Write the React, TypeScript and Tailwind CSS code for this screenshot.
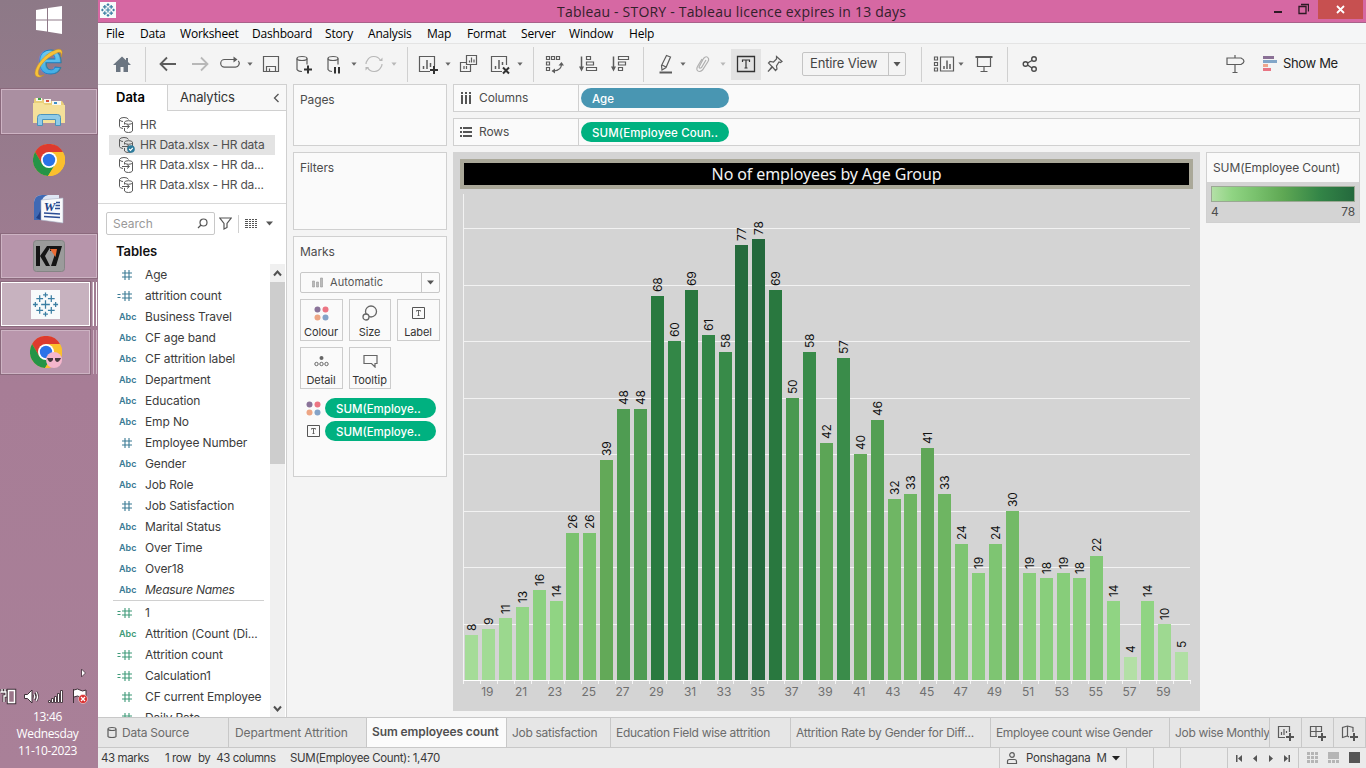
import React from "react";

type Kids = { children?: React.ReactNode; className?: string };

const ui = "font-['Inter',sans-serif]";

function Ico({ children, className = "", w = 24, h = 24 }: Kids & { w?: number; h?: number }) {
  return (
    <svg
      width={w}
      height={h}
      viewBox={`0 0 ${w} ${h}`}
      fill="none"
      stroke="#5c5c5c"
      strokeWidth="1.2"
      className={`shrink-0 ${className}`}
    >
      {children}
    </svg>
  );
}

function Caret({ className = "", color = "#666" }: { className?: string; color?: string }) {
  return (
    <svg width="8" height="8" viewBox="0 0 8 8" className={`shrink-0 ${className}`}>
      <path d="M1.4 2.4h5.2L4 5.8z" fill={color} />
    </svg>
  );
}

function Div({ className = "" }: { className?: string }) {
  return <div className={`h-[35px] w-px shrink-0 bg-[#d0d0d0] ${className}`} />;
}

function TableauMark({ size, cls = "" }: { size: number; cls?: string }) {
  const plus = (x: number, y: number, r: number) => `M${x - r} ${y}h${2 * r}M${x} ${y - r}v${2 * r}`;
  return (
    <svg width={size} height={size} viewBox="0 0 30 30" className={`shrink-0 ${cls}`}>
      <rect width="30" height="30" fill="#f8fafb" />
      <path
        d={[
          plus(15, 15, 4.5),
          plus(9, 9, 3.5),
          plus(21, 9, 3.5),
          plus(9, 21, 3.5),
          plus(21, 21, 3.5),
          plus(15, 5, 2.5),
          plus(15, 25, 2.5),
          plus(4.5, 15, 2.5),
          plus(25.5, 15, 2.5),
        ].join("")}
        stroke="#3c7fa3"
        strokeWidth={size < 20 ? 2.2 : 1.3}
        fill="none"
      />
    </svg>
  );
}

function Chrome() {
  return (
    <svg width="32" height="32" viewBox="0 0 32 32">
      <circle cx="16" cy="16" r="16" fill="#fbc02d" />
      <path d="M2.1 8A16 16 0 0 1 29.9 8H16L9 20z" fill="#dd3a2e" />
      <path d="M2.1 8A16 16 0 0 0 15 32l7.5-12.5L9.5 20.5z" fill="#259447" />
      <path d="M16 8h13.9A16 16 0 0 1 15 32l8-12z" fill="#fbc02d" />
      <circle cx="16" cy="16" r="8" fill="#fff" />
      <circle cx="16" cy="16" r="6.2" fill="#2b72e8" />
    </svg>
  );
}

function Taskbar() {
  const btn = "mx-px flex w-[96px] shrink-0 items-center justify-center border border-[#cdb3c3] outline outline-1 outline-[#8b6a7d]";
  return (
    <aside className="flex h-[768px] w-[98px] shrink-0 flex-col overflow-hidden bg-gradient-to-b from-[#8d7987] via-[#a77d96] to-[#a98098] font-['Open_Sans',sans-serif]">
      <div className="flex h-[40px] items-center justify-center">
        <svg width="28" height="28" viewBox="0 0 28 28" fill="#fff">
          <path d="M1 4l11-1.8v11.3H1zM13 2l14-2v13.500H13zM1 14.500h11v11L1 24zM13 14.500h14V28l-14-2.300z" />
        </svg>
      </div>
      <div className="flex h-[49px] items-center justify-center pb-[3px]">
        <svg width="32" height="32" viewBox="0 0 32 32" overflow="visible">
          <defs>
            <linearGradient id="ie" x1="0" y1="0" x2="0" y2="1">
              <stop offset="0" stopColor="#8fdcf8" />
              <stop offset="1" stopColor="#2fa3e0" />
            </linearGradient>
          </defs>
          <text x="17" y="27" textAnchor="middle" fontSize="44" fontWeight="700" fontFamily="Liberation Sans" fill="url(#ie)" stroke="#1d7fc0" strokeWidth="0.8">e</text>
          <path d="M3 29C-1 24 9 9 20 4c8-4 11-1 8 6 1-5-1-6-6-3C11 12 3 23 6 28c1 1 3 1 5 0-3 2-6 3-8 1z" fill="#f6c23a" stroke="#c98d1c" strokeWidth="0.5" />
        </svg>
      </div>
      <div className={`${btn} h-[45px] bg-[#aa8fa1]`}>
        <svg width="32" height="30" viewBox="0 0 32 30">
          <path d="M1 3l1-2h7l1 2h7l1 1h11l2 3v19H1z" fill="#e9cf79" />
          <path d="M3 1h6v3H3z" fill="#f7f7f0" />
          <path d="M5 1h3v2H5z" fill="#43a047" />
          <path d="M11 2h7v4h-7z" fill="#f7f7f0" />
          <path d="M13 3h3v2h-3z" fill="#d7513b" />
          <path d="M19 4h9v4h-9z" fill="#f7f7f0" />
          <path d="M21 5h3v2h-3z" fill="#3b8fc9" />
          <path d="M0 6h10l2 2h20v18H0z" fill="#f4e09a" />
          <path d="M4.500 28.500v-8q0-3 3-3h17q3 0 3 3v8h-5v-6h-13v6z" fill="#8fcbe8" stroke="#4b94bd" />
        </svg>
      </div>
      <div className="flex h-[52px] items-center justify-center"><Chrome /></div>
      <div className="flex h-[46px] items-center justify-center">
        <svg width="30" height="30" viewBox="0 0 30 30">
          <path d="M0 26V8q1-7 8-7h17v25z" fill="#dfe6f4" />
          <path d="M0 26V8q1-7 8-7h6q-6 1-7 9v16z" fill="#3f69b4" />
          <path d="M2 24q3-3 5-9v11z" fill="#1f3f85" />
          <path d="M7 6l22-2v25L7 26z" fill="#f9fafc" stroke="#a9b2c6" strokeWidth="0.6" />
          <text x="15.500" y="16.500" textAnchor="middle" fontSize="13" fontStyle="italic" fontWeight="700" fontFamily="Liberation Serif" fill="#203f86">W</text>
          <path d="M22 8.500h4M21.500 11.500h4.500M21 14.500h5M10 19l16 1M10 22.500l16 1" stroke="#2c4d94" strokeWidth="1.7" />
        </svg>
      </div>
      <div className={`${btn} mt-[2px] h-[44px] bg-[#b795ab]`}>
        <svg width="32" height="32" viewBox="0 0 32 32">
          <rect x="0.500" y="0.500" width="31" height="31" rx="3" fill="#9b9b9b" stroke="#858585" />
          <path d="M3 6h4v20H3zM7 16l7-10h4l-6 10 5 10h-4zM17 6h12l-6 20h-5l5-15h-6z" fill="#151515" />
          <path d="M17 9h7l-1.500 8z" fill="#ec6b33" />
        </svg>
      </div>
      <div className="mx-px mt-[4px] flex h-[44px] shrink-0">
        <div className="flex w-[89px] items-center justify-center border border-white bg-[#c7b2bf] outline outline-1 outline-[#8b6a7d]">
          <TableauMark size={29} />
        </div>
        <div className="ml-[2px] w-[2px] border-r border-white bg-[#c0a8b7]" />
        <div className="ml-[2px] w-px bg-white" />
      </div>
      <div className="mx-px mt-[4px] flex h-[44px] shrink-0">
        <div className="flex w-[89px] items-center justify-center border border-[#cdb3c3] bg-[#b996ac] outline outline-1 outline-[#8b6a7d]">
          <div className="relative h-[32px] w-[32px]">
            <Chrome />
            <svg width="16" height="16" viewBox="0 0 16 16" className="absolute right-0 bottom-0">
              <circle cx="8" cy="8" r="8" fill="#f4b6cc" />
              <path d="M1 6h6v2q-3 4-5 0zM9 6h6l-1 2q-3 4-5 0z" fill="#45393e" />
            </svg>
          </div>
        </div>
        <div className="ml-[2px] w-[2px] border-r border-[#cdb3c3]" />
        <div className="ml-[2px] w-px bg-[#cdb3c3]" />
      </div>
      <div className="mt-auto flex justify-end pr-[11px]">
        <svg width="7" height="10" viewBox="0 0 7 10"><path d="M1.500 1l4 4-4 4z" fill="#fff" stroke="#5d4653" /></svg>
      </div>
      <div className="mt-[10px] flex h-[17px] items-center">
        <svg width="90" height="17" viewBox="0 0 90 17" fill="none" stroke="#3f3038">
          <path d="M1 4h5v4H4v6M2 1v3M5 1v3" stroke="#3f3038" strokeWidth="3" />
          <path d="M0.500 4h5.500v4H4v6M2 1v3M5 1v3" stroke="#fff" strokeWidth="1.300" />
          <rect x="8.500" y="2.500" width="6" height="12" stroke="#3f3038" strokeWidth="3.500" />
          <rect x="8.500" y="2.500" width="6" height="12" fill="#9a7589" stroke="#fff" strokeWidth="1.500" />
          <path d="M24.500 6.500h3l4.500-4.500v13l-4.500-4.500h-3z" fill="#fff" />
          <path d="M34 6q1.500 2.500 0 5M36 4q3 4.500 0 9" stroke="#3f3038" strokeWidth="2.600" />
          <path d="M34 6q1.500 2.500 0 5M36 4q3 4.500 0 9" stroke="#fff" strokeWidth="1.200" />
          <path d="M48.500 12.500h2v2h-2zM51.500 10.500h2v4h-2zM54.500 8.500h2v6h-2zM57.500 5.500h2v9h-2zM60.500 2.500h2v12h-2z" fill="#fff" strokeWidth="0.900" />
          <path d="M73.500 1v14M74 2q4-2 6 0t6 0v7q-4 2-6 0t-6 0" fill="#fff" />
          <circle cx="83" cy="11" r="4.500" fill="#d93030" stroke="#fff" strokeWidth="0.500" />
          <path d="M81 9l4 4M85 9l-4 4" stroke="#fff" strokeWidth="1.300" />
        </svg>
      </div>
      <div className="mt-[3px] mb-[9px] pr-[3px] text-center text-[12px] leading-[17px] tracking-[-0.35px] text-white">
        <div>13:46</div>
        <div>Wednesday</div>
        <div>11-10-2023</div>
      </div>
    </aside>
  );
}

const menus: [string, string][] = [
  ["File", "w-[34px]"], ["Data", "w-[40px]"], ["Worksheet", "w-[72px]"], ["Dashboard", "w-[73px]"],
  ["Story", "w-[43px]"], ["Analysis", "w-[59px]"], ["Map", "w-[40px]"], ["Format", "w-[54px]"],
  ["Server", "w-[48px]"], ["Window", "w-[60px]"], ["Help", "w-[40px]"],
];

function TitleBar() {
  return (
    <>
      <div className="flex h-[23px] shrink-0 items-center border-b border-[#a8618a] bg-[#d668a3] font-['Open_Sans',sans-serif]">
        <TableauMark size={16} cls="ml-[2px] -mt-[2px]" />
        <div className="w-[441px]" />
        <span className="whitespace-nowrap text-[14px] tracking-[0.2px] text-[#33202b]">Tableau - STORY - Tableau licence expires in 13 days</span>
        <svg width="36" height="16" viewBox="0 0 36 16" className="mr-[9px] ml-auto self-start" fill="none" stroke="#2c1a24">
          <path d="M1 12h8" strokeWidth="2" />
          <path d="M26 6.500h7v7h-7zM28 4.500h7.500v7" strokeWidth="1.300" />
        </svg>
        <div className="mr-[3px] flex h-[19px] w-[45px] items-center justify-center self-start bg-[#c75050]">
          <svg width="9" height="9" viewBox="0 0 9 9"><path d="M1 1l7 7M8 1L1 8" stroke="#fff" strokeWidth="1.800" /></svg>
        </div>
      </div>
      <div className="flex h-[21px] shrink-0 items-center border-b border-[#e4e4e4] bg-[#f5f6f7] pt-[2px] pl-[8px] font-['Open_Sans',sans-serif] text-[12px] tracking-[-0.2px] text-black">
        {menus.map(([m, w]) => (
          <span key={m} className={`${w} shrink-0 whitespace-nowrap`}>{m}</span>
        ))}
      </div>
    </>
  );
}

function Toolbar() {
  return (
    <div className={`flex h-[40px] shrink-0 items-center bg-[#f4f4f4] ${ui}`}>
      <Ico className="ml-[12px]"><path d="M12 4.500L3 13h3v7h4.500v-5h3v5H18v-7h3l-3-3V6h-2v2.300z" fill="#6b7581" stroke="none" /></Ico>
      <Div className="ml-[11px]" />
      <Ico className="ml-[10px]"><path d="M20 12H5M11 5.500L4.500 12l6.500 6.500" strokeWidth="1.800" /></Ico>
      <Ico className="ml-[8px]"><path d="M4 12h15M13 5.500l6.500 6.500-6.500 6.500" stroke="#b8b8b8" strokeWidth="1.800" /></Ico>
      <Ico className="ml-[6px]"><path d="M12 7.500H6.500a3.800 3.800 0 0 0 0 7.600h11a3.800 3.800 0 0 0 2.800-6.300M12 7.500h5" /><path d="M15.500 4.500l4 3-4 3z" fill="#5c5c5c" stroke="none" /></Ico>
      <Caret className="ml-[4px]" />
      <Ico className="ml-[5px]"><path d="M4.500 4.500h15v15h-15zM7.500 19.500v-5h9v5M10.500 19.500v-3" /></Ico>
      <Ico className="ml-[9px]"><ellipse cx="10" cy="6.500" rx="5" ry="2" /><path d="M5 6.500v11q1 2 5 2M15 6.500v6" /><path d="M16 13.500v8M12 17.500h8" stroke="#333" strokeWidth="2" /></Ico>
      <Ico className="ml-[6px]"><ellipse cx="11" cy="6.500" rx="5" ry="2" /><path d="M6 6.500v11q1 2 4 2M16 6.500v6" /><path d="M13 15v6.500M17 15v6.500" stroke="#333" strokeWidth="2" /></Ico>
      <Caret className="ml-[4px]" />
      <Ico className="ml-[4px]"><g stroke="#b8b8b8"><path d="M5 9a7.500 7.500 0 0 1 13.500-.5M19 15a7.500 7.500 0 0 1-13.500.5M4 12q0-2 1-3M20 12q0 2-1 3" /><path d="M17 9h3.500V5.500zM7 15H3.500v3.500z" fill="#b8b8b8" stroke="none" /></g></Ico>
      <Caret className="ml-[4px]" color="#b8b8b8" />
      <Div className="ml-[9px]" />
      <Ico className="ml-[8px]"><path d="M14 19.500H3.500v-15h15V14" /><path d="M7.500 17v-3M11 17V8M14.500 15v-4" strokeWidth="1.500" /><path d="M18 14v8M14 18h8" stroke="#333" strokeWidth="2" /></Ico>
      <Caret className="ml-[4px]" />
      <Ico className="ml-[5px]"><path d="M9.500 3.500h10v9h-10zM9.500 10.500h-6v9h10v-7M7 17v-3M9.500 17v-3M12.500 10.500v-2M14.500 10.500v-5M17 10.500v-3" /></Ico>
      <Ico className="ml-[7px]"><path d="M14 19.500H3.500v-15h15V13" /><path d="M7.500 17v-3M11 17V8M14.500 13v-3" strokeWidth="1.500" /><path d="M15 15.500l6 6M21 15.500l-6 6" stroke="#333" strokeWidth="2" /></Ico>
      <Caret className="ml-[4px]" />
      <Div className="ml-[9px]" />
      <Ico className="ml-[9px]"><path d="M3.500 4.500h3v3h-3zM8.500 4.500h3v3h-3zM13.500 4.500h3v3h-3zM3.500 10h3v3h-3zM3.500 15.500h3v3h-3zM18.500 12q0 6.500-8 7" /><path d="M15.500 13.500l3-3.500 2.500 3.500zM12 16.500L8.500 19l3.500 2.500z" fill="#5c5c5c" stroke="none" /></Ico>
      <Ico className="ml-[9px]"><path d="M5.500 4.500V17" strokeWidth="1.500" /><path d="M3 14.500h5l-2.500 5z" fill="#5c5c5c" stroke="none" /><path d="M10.500 4.500h4v3h-4zM10.500 10h7v3h-7zM10.500 15.500h10v3h-10z" /></Ico>
      <Ico className="ml-[8px]"><path d="M5.500 4.500V17" strokeWidth="1.500" /><path d="M3 14.500h5l-2.500 5z" fill="#5c5c5c" stroke="none" /><path d="M10.500 4.500h10v3h-10zM10.500 10h7v3h-7zM10.500 15.500h4v3h-4z" /></Ico>
      <Div className="ml-[11px]" />
      <Ico className="ml-[10px]"><path d="M12.500 3.500l4 1.500-4.500 10.500-4 2.500-.5-4.500zM8 13l4 2" /><path d="M5.500 20.500H18" strokeWidth="2" /></Ico>
      <Caret className="ml-[1px]" />
      <Ico className="ml-[4px]"><path d="M15 8l-4.500 7.500q-2 1.500-2.500-.5L12.500 6.500q3-3.500 5 0 .5 1.500-.5 3L11.500 18q-3.500 3-5.500 0-.5-2 .5-3.500L11 7" stroke="#b0b0b0" /></Ico>
      <Caret className="ml-[4px]" color="#b8b8b8" />
      <div className="ml-[4px] flex h-[31px] w-[30px] shrink-0 items-center justify-center bg-[#e3e3e3]">
        <Ico><path d="M3.500 4.500h17v15h-17z" stroke="#333" strokeWidth="1.300" /><path d="M8.500 10V8h7v2M12 8v8M10.500 16h3" stroke="#333" /></Ico>
      </div>
      <Ico className="ml-[2px]"><path d="M13.500 4.500l5.500 5-1.500 1-1.500-.5-2.500 4 .5 3-1.500 1.500-3-3.500L5 19.500l4-5L5.500 11 7 9.500l3.500.5 3-3z" /></Ico>
      <div className="ml-[15px] flex h-[24px] w-[104px] shrink-0 items-center rounded-[2px] border border-[#c4c4c4] text-[13px] text-[#444]">
        <span className="w-[85px] pl-[7px] whitespace-nowrap tracking-[-0.15px]">Entire View</span>
        <div className="flex h-full flex-1 items-center justify-center border-l border-[#c4c4c4]">
          <svg width="8" height="6" viewBox="0 0 8 6"><path d="M0.500 1h7L4 5.500z" fill="#555" /></svg>
        </div>
      </div>
      <Div className="ml-[15px]" />
      <Ico className="ml-[9px]"><path d="M3.500 5h3v3h-3zM3.500 10.500h3v3h-3zM3.500 16h3v3h-3zM9.500 5h13v14h-13z" /><path d="M13 17v-3M16 17V8.500M19 17v-5" strokeWidth="1.500" /></Ico>
      <Caret className="ml-[2px]" />
      <Ico className="ml-[7px]"><path d="M3.500 5h17" strokeWidth="2" /><path d="M5.500 5.500v9h13v-9M12 14.500v4.500M8.500 19.500h7" /></Ico>
      <Div className="ml-[11px]" />
      <Ico className="ml-[10px]" ><g strokeWidth="1.400" stroke="#4a4a4a"><circle cx="7.500" cy="12" r="2.300" /><circle cx="16" cy="7" r="2.300" /><circle cx="16" cy="17" r="2.300" /><path d="M9.500 11l4.500-2.500M9.500 13l4.500 3" /></g></Ico>
      <Ico className="ml-auto"><path d="M12 3v3M12 12.500v8M9.500 20.500h5M4 6h14q3 1.500 3 3.200t-3 3.300H4z" /></Ico>
      <svg width="14" height="16" viewBox="0 0 14 16" className="ml-[16px] shrink-0">
        <path d="M0 0h11v3H0z" fill="#8a7095" /><path d="M0 4h14v3H0z" fill="#83a6c8" />
        <path d="M0 8h5v3H0z" fill="#efa68c" /><path d="M0 12h8v3H0z" fill="#e97583" />
      </svg>
      <span className="ml-[6px] w-[83px] whitespace-nowrap text-[13px] tracking-[-0.35px] text-[#222]">Show Me</span>
    </div>
  );
}

function DataSource({ label, active }: { label: string; active?: boolean }) {
  return (
    <div className={`mr-[11px] ml-[11px] flex h-[20px] items-center pl-[9px] text-[12px] tracking-[-0.21px] text-[#505050] ${active ? "bg-[#e3e3e3]" : ""}`}>
      <Ico w={18} h={18}>
        <g strokeWidth="1">
          <path d="M5 12.500Q1.500 12 1.500 10.500V3.500Q2 1.500 6 1.500t4.500 2M1.500 3.500Q2 5.500 5 5.500" />
          <ellipse cx="10.500" cy="6.500" rx="4" ry="1.800" />
          <path d="M6.500 6.500v2M6.500 12v3q1 1.500 4 1.500t4-1.500v-8.500M4 10.500h7M9 8.500l2.500 2L9 12.500" />
        </g>
        {active && <><circle cx="13" cy="13" r="3.800" fill="#2d7b9c" stroke="none" /><path d="M11.200 13l1.300 1.300 2.300-2.500" stroke="#fff" /></>}
      </Ico>
      <span className="ml-[4px] whitespace-nowrap">{label}</span>
    </div>
  );
}

type Kind = "num" | "calc" | "abc";

function Field({ kind, label, measure, italic }: { kind: Kind; label: string; measure?: boolean; italic?: boolean }) {
  const color = measure ? "#3e9a78" : "#3a7a94";
  return (
    <div className="flex h-[21px] shrink-0 items-center">
      <div className="flex w-[47px] shrink-0 justify-start pl-[19px]">
        {kind === "abc" ? (
          <span className={`pl-[2px] text-[9px] leading-[12px] font-semibold ${measure ? "text-[#3e9a78]" : "text-[#3a7a94]"}`}>Abc</span>
        ) : (
          <svg width="18" height="12" viewBox="0 0 18 12" fill="none" stroke={color} strokeWidth="1.100">
            <path d="M8 1v10M12 1v10M5 4h10M5 8h10" />
            {kind === "calc" && <path d="M0.500 4.500h3M0.500 7.500h3" />}
          </svg>
        )}
      </div>
      <span className={`whitespace-nowrap text-[12px] tracking-[-0.14px] text-[#3c3c3c] ${italic ? "italic tracking-[-0.28px]" : ""}`}>{label}</span>
    </div>
  );
}

const dims: [Kind, string][] = [
  ["num", "Age"], ["calc", "attrition count"], ["abc", "Business Travel"], ["abc", "CF age band"],
  ["abc", "CF attrition label"], ["abc", "Department"], ["abc", "Education"], ["abc", "Emp No"],
  ["num", "Employee Number"], ["abc", "Gender"], ["abc", "Job Role"], ["num", "Job Satisfaction"],
  ["abc", "Marital Status"], ["abc", "Over Time"], ["abc", "Over18"], ["abc", "Measure Names"],
];
const measures: [Kind, string][] = [
  ["calc", "1"], ["abc", "Attrition (Count (Di..."], ["calc", "Attrition count"],
  ["calc", "Calculation1"], ["num", "CF current Employee"], ["num", "Daily Rate"],
];

function DataPane() {
  return (
    <section className={`flex h-[633px] w-[189px] shrink-0 flex-col overflow-hidden border-t border-r border-[#d0d0d0] bg-white ${ui}`}>
      <div className="flex h-[26px] shrink-0">
        <div className="flex w-[69px] items-center pl-[18px] text-[13px] font-semibold text-black">Data</div>
        <div className="flex flex-1 items-center border-b border-l border-[#d0d0d0] bg-[#f8f8f8] pl-[12px] text-[13px] tracking-[-0.2px] text-[#333]">
          Analytics
          <svg width="7" height="10" viewBox="0 0 7 10" className="mr-[6px] ml-auto"><path d="M5.500 1L1.500 5l4 4" fill="none" stroke="#555" strokeWidth="1.300" /></svg>
        </div>
      </div>
      <div className="flex h-[93px] shrink-0 flex-col border-b border-[#d8d8d8] pt-[4px]">
        <DataSource label="HR" />
        <DataSource label="HR Data.xlsx - HR data" active />
        <DataSource label="HR Data.xlsx - HR da..." />
        <DataSource label="HR Data.xlsx - HR da..." />
      </div>
      <div className="mt-[8px] flex h-[23px] shrink-0 items-center pl-[8px]">
        <div className="flex h-[23px] w-[109px] items-center justify-between rounded-[2px] border border-[#c8c8c8] pr-[6px] pl-[6px] text-[12px] text-[#999]">
          Search
          <svg width="11" height="11" viewBox="0 0 11 11" fill="none" stroke="#555" strokeWidth="1.200"><circle cx="6.500" cy="4.500" r="3.500" /><path d="M4 7L1 10" /></svg>
        </div>
        <svg width="13" height="13" viewBox="0 0 13 13" fill="none" stroke="#555" strokeWidth="1.200" className="ml-[4px]"><path d="M0.800 1h11.400L8 6.500v4L5 12V6.500z" /></svg>
        <div className="ml-[6px] h-[18px] w-px bg-[#d0d0d0]" />
        <svg width="12" height="10" viewBox="0 0 12 10" className="ml-[6px]" stroke="#555"><path d="M0 0.500h12M0 2.500h12M0 4.500h12M0 6.500h12M0 8.500h12" strokeDasharray="3 1 2 1 2 1 2" /></svg>
        <svg width="7" height="5" viewBox="0 0 7 5" className="ml-[9px]"><path d="M0 0.500h7L3.500 4.500z" fill="#555" /></svg>
      </div>
      <div className="flex h-[29px] shrink-0 items-center pt-[4px] pl-[18px] text-[13px] font-semibold tracking-[-0.05px] text-[#111]">Tables</div>
      <div className="flex min-h-0 flex-1">
        <div className="flex w-[172px] flex-col overflow-hidden">
          {dims.map(([k, l]) => <Field key={l} kind={k} label={l} italic={l === "Measure Names"} />)}
          <div className="mr-[6px] mb-[1px] ml-[15px] h-px shrink-0 bg-[#d0d0d0]" />
          {measures.map(([k, l]) => <Field key={l} kind={k} label={l} measure />)}
        </div>
        <div className="flex w-[15px] flex-col items-center bg-[#f0f0f0] pt-px">
          <svg width="15" height="17" viewBox="0 0 15 17"><path d="M4 10.500l3.500-4 3.500 4" fill="none" stroke="#505050" strokeWidth="2" /></svg>
          <div className="h-[182px] w-full bg-[#cdcdcd]" />
          <svg width="15" height="17" viewBox="0 0 15 17" className="mt-auto"><path d="M4 6.500l3.500 4 3.500-4" fill="none" stroke="#505050" strokeWidth="2" /></svg>
        </div>
      </div>
    </section>
  );
}

function Dots({ size }: { size: number }) {
  return (
    <svg width={size} height={size} viewBox="0 0 15 15">
      <circle cx="3.500" cy="3.500" r="3" fill="#8a7399" /><circle cx="11.500" cy="3.500" r="3" fill="#ec7583" />
      <circle cx="3.500" cy="11.500" r="3" fill="#eda584" /><circle cx="11.500" cy="11.500" r="3" fill="#84a3c8" />
    </svg>
  );
}

function TBox() {
  return (
    <svg width="13" height="12" viewBox="0 0 13 12" fill="none" stroke="#555"><path d="M0.500 0.500h12v11H0.500z" /><path d="M4.500 4.500v-1h4v1M6.500 3.500v5M5.500 8.500h2" strokeWidth="0.900" /></svg>
  );
}

function MarkButton({ label, children }: { label: string; children: React.ReactNode }) {
  return (
    <div className="flex h-[42px] flex-col items-center justify-end border border-[#ccc] bg-[#fafafa] pb-[1px]">
      <div className="-mt-px mb-px flex h-[22px] items-center justify-center">{children}</div>
      <span className="pr-px text-[11px] leading-[14px] text-[#333]">{label}</span>
    </div>
  );
}

function Pill({ children, className }: Kids) {
  return <div className={`flex h-[20px] shrink-0 items-center rounded-full pt-[2px] text-[11.5px] leading-[18px] font-medium whitespace-nowrap text-white ${className}`}>{children}</div>;
}

function Cards() {
  const card = "w-[154px] shrink-0 border border-[#d0d0d0] bg-[#fafafa] text-[12px] text-[#4c4c4c] tracking-[-0.1px]";
  return (
    <section className={`ml-[6px] flex w-[154px] shrink-0 flex-col gap-[6px] ${ui}`}>
      <div className={`${card} h-[62px] pt-[6px] pl-[6px]`}>Pages</div>
      <div className={`${card} h-[78px] pt-[6px] pl-[6px]`}>Filters</div>
      <div className={`${card} flex h-[241px] flex-col px-[6px] pt-[6px]`}>
        <div className="leading-[18px]">Marks</div>
        <div className="mt-[11px] flex h-[21px] w-[140px] items-center rounded-[2px] border border-[#c8c8c8] text-[11px] text-[#555]">
          <svg width="12" height="11" viewBox="0 0 12 11" className="ml-[11px]" fill="#bbb" stroke="#999" strokeWidth="0.600"><path d="M0.500 4h2v6h-2zM4.500 5h2v5h-2zM8.500 1h2v9h-2z" /></svg>
          <span className="ml-[6px] flex-1 tracking-[0.05px]">Automatic</span>
          <div className="flex h-full w-[18px] items-center justify-center border-l border-[#c8c8c8]">
            <svg width="7" height="5" viewBox="0 0 7 5"><path d="M0 0.500h7L3.500 4.500z" fill="#555" /></svg>
          </div>
        </div>
        <div className="mt-[6px] grid w-[140px] grid-cols-[43px_42px_43px] gap-[6px]">
          <MarkButton label="Colour"><Dots size={15} /></MarkButton>
          <MarkButton label="Size">
            <svg width="16" height="16" viewBox="0 0 16 16" fill="none" stroke="#666" strokeWidth="1.300"><circle cx="9" cy="6.500" r="5.500" /><circle cx="4" cy="12" r="3" fill="#fafafa" /></svg>
          </MarkButton>
          <MarkButton label="Label"><TBox /></MarkButton>
          <MarkButton label="Detail">
            <svg width="15" height="12" viewBox="0 0 15 12" fill="none" stroke="#666"><circle cx="7.500" cy="3" r="2" fill="#666" stroke="none" /><circle cx="2.500" cy="9" r="1.700" /><circle cx="7.500" cy="9" r="1.700" /><circle cx="12.500" cy="9" r="1.700" /></svg>
          </MarkButton>
          <MarkButton label="Tooltip">
            <svg width="15" height="14" viewBox="0 0 15 14" fill="none" stroke="#666" strokeWidth="1.200"><path d="M1 1.500h13v8h-2v3.500l-3.500-3.500H1z" /></svg>
          </MarkButton>
        </div>
        <div className="mt-[9px] flex items-center"><div className="ml-[6px] w-[19px]"><Dots size={15} /></div><Pill className="w-[111px] bg-[#00b180] pl-[11px] tracking-normal">SUM(Employe..</Pill></div>
        <div className="mt-[3px] flex items-center"><div className="ml-[6px] w-[19px] pl-px"><TBox /></div><Pill className="w-[111px] bg-[#00b180] pl-[11px] tracking-normal">SUM(Employe..</Pill></div>
      </div>
    </section>
  );
}

const counts = [8, 9, 11, 13, 16, 14, 26, 26, 39, 48, 48, 68, 60, 69, 61, 58, 77, 78, 69, 50, 58, 42, 57, 40, 46, 32, 33, 41, 33, 24, 19, 24, 30, 19, 18, 19, 18, 22, 14, 4, 14, 10, 5];
const ramp: [number, number[]][] = [
  [4, [179, 224, 166]], [8, [165, 220, 152]], [14, [144, 212, 131]], [26, [122, 194, 110]], [39, [99, 169, 88]],
  [48, [79, 156, 82]], [60, [51, 135, 71]], [68, [41, 122, 63]], [78, [36, 105, 61]],
];
function shade(v: number) {
  for (let i = 1; i < ramp.length; i++) {
    const [b, cb] = ramp[i];
    if (v <= b) {
      const [a, ca] = ramp[i - 1];
      const t = (v - a) / (b - a);
      return `rgb(${ca.map((c, k) => Math.round(c + (cb[k] - c) * t)).join(",")})`;
    }
  }
  return "rgb(36,105,61)";
}

function Chart() {
  const base = 680;
  const unit = 5.65;
  const step = 16.9;
  return (
    <svg width="747" height="522" viewBox="453 189 747 522" className="block" shapeRendering="crispEdges" fontFamily="Inter, sans-serif">
      {[1, 2, 3, 4, 5, 6, 7, 8].map((k) => (
        <rect key={k} x="463" y={Math.round(base - k * 10 * unit)} width="727" height="1" fill="#f2f2f2" />
      ))}
      <rect x="463" y="194" width="1" height="490" fill="#f2f2f2" />
      {counts.map((v, i) => {
        const x = Math.round(465 + i * step);
        const y = Math.round(base - v * unit);
        return (
          <g key={i}>
            <rect x={x} y={y} width="13" height={base - y} fill={shade(v)} />
            <text transform={`translate(${x + 11} ${y - 4}) rotate(-90)`} fontSize="12" letterSpacing="-0.2" fill="#111">{v}</text>
          </g>
        );
      })}
      <rect x="463" y="680" width="728" height="1" fill="#fff" />
      {Array.from({ length: 44 }, (_, i) => (
        <rect key={i} x={Math.round(463 + i * step)} y="681" width="1" height="3" fill="#f5f5f5" />
      ))}
      {Array.from({ length: 21 }, (_, i) => (
        <text key={i} x={487.300 + i * step * 2} y="696" textAnchor="middle" fontSize="12" fill="#707070">{19 + i * 2}</text>
      ))}
    </svg>
  );
}

function Shelf({ label, icon, children }: { label: string; icon: React.ReactNode; children: React.ReactNode }) {
  return (
    <div className="flex h-[28px] shrink-0 items-center border border-[#d0d0d0] bg-[#fafafa] text-[12px] text-[#4c4c4c]">
      <div className="flex h-full w-[125px] items-center border-r border-[#d0d0d0] pl-[6px]">
        {icon}
        <span className="ml-[7px] tracking-[-0.1px]">{label}</span>
      </div>
      {children}
    </div>
  );
}

function Sheet() {
  return (
    <section className={`ml-[6px] flex w-[907px] shrink-0 flex-col gap-[6px] ${ui}`}>
      <Shelf label="Columns" icon={<svg width="12" height="12" viewBox="0 0 12 12" fill="#555"><path d="M1 0h2v2H1zM5 0h2v2H5zM9 0h2v2H9zM1 3h2v9H1zM5 3h2v9H5zM9 3h2v9H9z" /></svg>}>
        <Pill className="ml-[2px] w-[148px] bg-[#4996b2] pl-[11px]">Age</Pill>
      </Shelf>
      <Shelf label="Rows" icon={<svg width="12" height="12" viewBox="0 0 12 12" fill="#555"><path d="M0 1h2v2H0zM0 5h2v2H0zM0 9h2v2H0zM3 1h9v2H3zM3 5h9v2H3zM3 9h9v2H3z" /></svg>}>
        <Pill className="ml-[2px] w-[148px] bg-[#00b180] pl-[11px] tracking-[0.12px]">SUM(Employee Coun..</Pill>
      </Shelf>
      <div className="flex gap-[6px]">
        <div className="flex h-[559px] w-[747px] shrink-0 flex-col bg-[#d4d4d4] pt-[7px]">
          <div className="mx-[7px] flex h-[30px] shrink-0 items-center justify-center border-4 border-[#aaa899] bg-black font-['Noto_Sans',sans-serif] text-[16px] leading-[22px] tracking-[-0.12px] text-[#f2f2f2]">
            No of employees by Age Group
          </div>
          <Chart />
        </div>
        <div className="h-[71px] w-[154px] border border-[#d0d0d0] bg-[#d4d4d4] text-[12px] tracking-[-0.1px] text-[#4c4c4c]">
          <div className="flex h-[29px] items-center bg-[#fafafa] pl-[6px] whitespace-nowrap">SUM(Employee Count)</div>
          <div className="mx-[4px] mt-[4px] h-[16px] border border-[#9aa893] bg-[linear-gradient(90deg,#b3e0a6_0%,#90d483_14%,#7ac26e_30%,#5fa854_50%,#338547_76%,#24693d_100%)]" />
          <div className="mx-[4px] flex justify-between leading-[19px]"><span>4</span><span>78</span></div>
        </div>
      </div>
    </section>
  );
}

const tabs: [string, string][] = [
  ["Department Attrition", "w-[138px] pl-[6px]"], ["Sum employees count", "w-[140px] pl-[5px]"], ["Job satisfaction", "w-[104px] pl-[5px] tracking-[-0.3px]"],
  ["Education Field wise attrition", "w-[180px] pl-[5px] tracking-[-0.3px]"], ["Attrition Rate by Gender for Diff...", "w-[200px] pl-[5px] tracking-[-0.27px]"],
  ["Employee count wise Gender", "w-[179px] pl-[5px] tracking-[-0.36px]"], ["Job wise Monthly", "w-[100px] pl-[5px] tracking-[-0.33px]"],
];

function Tabs() {
  const plus = <path d="M15 10v8M11 14h8" stroke="#555" strokeWidth="2" />;
  const cell = "flex w-[32px] shrink-0 items-center justify-center border-r border-[#c8c8c8] pr-[2px]";
  return (
    <div className={`flex h-[31px] shrink-0 border-t border-b border-[#c8c8c8] bg-[#e6e6e6] text-[12px] tracking-[-0.1px] text-[#6c6c6c] ${ui}`}>
      <div className="flex w-[131px] shrink-0 items-center border-r border-[#c8c8c8] pl-[9px]">
        <Ico w={10} h={14}><path d="M1 3.500v7q.5 1 4 1t4-1v-7" /><ellipse cx="5" cy="3" rx="4" ry="1.500" /></Ico>
        <span className="ml-[5px] tracking-[-0.25px]">Data Source</span>
      </div>
      {tabs.map(([t, w], i) => (
        <div key={t} className={`${w} flex shrink-0 items-center overflow-hidden border-r border-[#c8c8c8] whitespace-nowrap ${i === 1 ? "bg-[#fbfbfb] pb-[2px] font-semibold tracking-[-0.1px] text-[#505050]" : ""}`}>{t}</div>
      ))}
      <div className={cell}><Ico w={20} h={20}><path d="M10 14.500H3.500v-11h11V9M6.500 12V9M9 12V6M11.500 10V8" />{plus}</Ico></div>
      <div className={cell}><Ico w={20} h={20}><path d="M10 13.500H3.500v-10h11V9M9 3.500v10M3.500 8.500h11" />{plus}</Ico></div>
      <div className={cell}><Ico w={20} h={20}><path d="M10 14L8.500 13 3.500 14.500V4.500l5-1.500 5.500 1.500V9M8.500 3v10" />{plus}</Ico></div>
    </div>
  );
}

function Status() {
  const cell = "h-full shrink-0 border-l border-[#c8c8c8]";
  return (
    <div className={`flex h-[20px] shrink-0 items-center bg-[#ebebeb] text-[11.5px] whitespace-nowrap text-[#3a3a3a] ${ui}`}>
      <span className="ml-[3px] w-[64px] pt-px tracking-[-0.4px]">43 marks</span>
      <span className="w-[125px] pt-px tracking-[-0.45px]"><span>1 row</span><span className="ml-[7px]">by</span><span className="ml-[6px]">43 columns</span></span>
      <span className="pt-px tracking-[-0.36px]">SUM(Employee Count): 1,470</span>
      <div className={`${cell} ml-auto flex w-[127px] items-center pl-[6px]`}>
        <Ico w={12} h={14}><circle cx="6" cy="4" r="2.300" /><path d="M1.500 12.500v-2q0-2 2-2h5q2 0 2 2v2z" /></Ico>
        <span className="ml-[8px] pt-px tracking-[-0.25px]">Ponshagana&nbsp; M</span>
        <svg width="8" height="5" viewBox="0 0 8 5" className="mr-[6px] ml-auto"><path d="M0 0h8L4 4.500z" fill="#222" /></svg>
      </div>
      <div className={`${cell} w-[27px]`} />
      <div className={`${cell} w-[27px]`} />
      <div className={`${cell} w-[47px]`} />
      <div className={`${cell} flex w-[71px] items-center`}>
        <svg width="70" height="9" viewBox="0 0 70 9" fill="#555"><path d="M8 1h1.500v7H8zM14 1v7l-4-3.500zM29 1v7l-4-3.500zM41 1v7l4-3.500zM56 1v7l4-3.500zM60.500 1H62v7h-1.500z" /></svg>
      </div>
      <div className={`${cell} flex w-[68px] items-center pl-[8px]`}>
        <svg width="54" height="12" viewBox="0 0 54 12" fill="#b5b5b5">
          <path d="M0 0h3v3H0zM4 0h3v3H4zM8 0h3v3H8zM0 4h3v3H0zM4 4h3v3H4zM8 4h3v3H8zM0 8h3v3H0zM4 8h3v3H4zM8 8h3v3H8zM21 0h11v7H21zM21 8h3v3h-3zM25 8h3v3h-3zM29 8h3v3h-3z" />
          <path d="M42 0h11v11H42z" fill="#555" />
        </svg>
      </div>
    </div>
  );
}

export default function App() {
  return (
    <div className="flex h-[768px] w-[1366px] overflow-hidden bg-[#f4f4f4]">
      <Taskbar />
      <main className="flex w-[1268px] shrink-0 flex-col">
        <TitleBar />
        <Toolbar />
        <div className="flex h-[633px] shrink-0">
          <DataPane />
          <Cards />
          <Sheet />
        </div>
        <Tabs />
        <Status />
      </main>
    </div>
  );
}
